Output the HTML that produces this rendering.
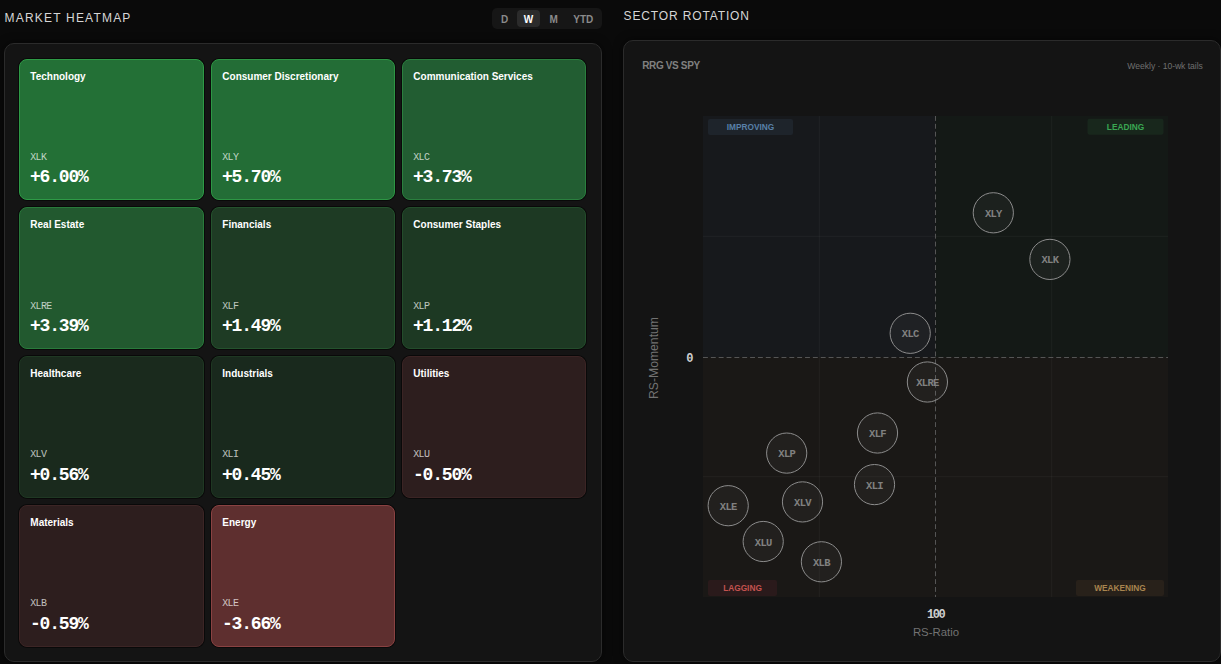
<!DOCTYPE html>
<html><head><meta charset="utf-8"><title>Market Heatmap</title>
<style>
html,body{margin:0;padding:0;background:#0a0a0a;width:1221px;height:664px;overflow:hidden;position:relative}
.panel{position:absolute;background:#141414;border:1px solid #2b2b2b;border-radius:10px;box-sizing:border-box;box-shadow:0 0 10px rgba(0,0,0,0.6)}
.card{position:absolute;box-sizing:border-box;border-radius:8px;border:1px solid;box-shadow:0 0 0 1px rgba(0,0,0,0.55)}
</style></head><body>

<div style="position:absolute;left:4.50px;top:11.84px;font:400 12px/12px 'Liberation Sans', sans-serif;color:#d6d6d6;letter-spacing:1.2px;white-space:nowrap;">MARKET HEATMAP</div>
<div style="position:absolute;left:623.60px;top:9.84px;font:400 12px/12px 'Liberation Sans', sans-serif;color:#d6d6d6;letter-spacing:0.86px;white-space:nowrap;">SECTOR ROTATION</div>
<div style="position:absolute;left:492px;top:8px;width:110px;height:21px;background:#161616;border-radius:5px"></div>
<div style="position:absolute;left:517px;top:10px;width:23px;height:17px;background:#2b2b2b;border-radius:4px"></div>
<div style="position:absolute;left:474.70px;width:60px;text-align:center;top:14.93px;font:700 10px/10px 'Liberation Sans', sans-serif;color:#8a8a8a;letter-spacing:0px;white-space:nowrap">D</div>
<div style="position:absolute;left:498.40px;width:60px;text-align:center;top:14.93px;font:700 10px/10px 'Liberation Sans', sans-serif;color:#ffffff;letter-spacing:0px;white-space:nowrap">W</div>
<div style="position:absolute;left:523.60px;width:60px;text-align:center;top:14.93px;font:700 10px/10px 'Liberation Sans', sans-serif;color:#8a8a8a;letter-spacing:0px;white-space:nowrap">M</div>
<div style="position:absolute;left:553.30px;width:60px;text-align:center;top:14.93px;font:700 10px/10px 'Liberation Sans', sans-serif;color:#8a8a8a;letter-spacing:0px;white-space:nowrap">YTD</div>
<div class="panel" style="left:4px;top:43px;width:598px;height:619px"></div>
<div class="panel" style="left:623px;top:40px;width:598px;height:622px"></div>
<div class="card" style="left:19px;top:59px;width:185px;height:141px;background:#237036;border-color:#2e9a46"></div>
<div style="position:absolute;left:30.30px;top:71.63px;font:700 10px/10px 'Liberation Sans', sans-serif;color:#ffffff;letter-spacing:0px;white-space:nowrap;">Technology</div>
<div style="position:absolute;left:30.30px;top:152.89px;font:400 10px/10px 'Liberation Mono', monospace;color:rgba(255,255,255,0.72);letter-spacing:-0.7px;white-space:nowrap;">XLK</div>
<div style="position:absolute;left:30.00px;top:168.35px;font:700 18px/18px 'Liberation Mono', monospace;color:#ffffff;letter-spacing:-1.2px;white-space:nowrap;">+6.00%</div>
<div class="card" style="left:211px;top:59px;width:184px;height:141px;background:#236d36;border-color:#2d9644"></div>
<div style="position:absolute;left:222.30px;top:71.63px;font:700 10px/10px 'Liberation Sans', sans-serif;color:#ffffff;letter-spacing:0px;white-space:nowrap;">Consumer Discretionary</div>
<div style="position:absolute;left:222.30px;top:152.89px;font:400 10px/10px 'Liberation Mono', monospace;color:rgba(255,255,255,0.72);letter-spacing:-0.7px;white-space:nowrap;">XLY</div>
<div style="position:absolute;left:222.00px;top:168.35px;font:700 18px/18px 'Liberation Mono', monospace;color:#ffffff;letter-spacing:-1.2px;white-space:nowrap;">+5.70%</div>
<div class="card" style="left:402px;top:59px;width:184px;height:141px;background:#225d32;border-color:#2a7f3e"></div>
<div style="position:absolute;left:413.30px;top:71.63px;font:700 10px/10px 'Liberation Sans', sans-serif;color:#ffffff;letter-spacing:0px;white-space:nowrap;">Communication Services</div>
<div style="position:absolute;left:413.30px;top:152.89px;font:400 10px/10px 'Liberation Mono', monospace;color:rgba(255,255,255,0.72);letter-spacing:-0.7px;white-space:nowrap;">XLC</div>
<div style="position:absolute;left:413.00px;top:168.35px;font:700 18px/18px 'Liberation Mono', monospace;color:#ffffff;letter-spacing:-1.2px;white-space:nowrap;">+3.73%</div>
<div class="card" style="left:19px;top:207px;width:185px;height:142px;background:#22592f;border-color:#297a3b"></div>
<div style="position:absolute;left:30.30px;top:220.38px;font:700 10px/10px 'Liberation Sans', sans-serif;color:#ffffff;letter-spacing:0px;white-space:nowrap;">Real Estate</div>
<div style="position:absolute;left:30.30px;top:301.63px;font:400 10px/10px 'Liberation Mono', monospace;color:rgba(255,255,255,0.72);letter-spacing:-0.7px;white-space:nowrap;">XLRE</div>
<div style="position:absolute;left:30.00px;top:317.10px;font:700 18px/18px 'Liberation Mono', monospace;color:#ffffff;letter-spacing:-1.2px;white-space:nowrap;">+3.39%</div>
<div class="card" style="left:211px;top:207px;width:184px;height:142px;background:#1e3b24;border-color:#24522d"></div>
<div style="position:absolute;left:222.30px;top:220.38px;font:700 10px/10px 'Liberation Sans', sans-serif;color:#ffffff;letter-spacing:0px;white-space:nowrap;">Financials</div>
<div style="position:absolute;left:222.30px;top:301.63px;font:400 10px/10px 'Liberation Mono', monospace;color:rgba(255,255,255,0.72);letter-spacing:-0.7px;white-space:nowrap;">XLF</div>
<div style="position:absolute;left:222.00px;top:317.10px;font:700 18px/18px 'Liberation Mono', monospace;color:#ffffff;letter-spacing:-1.2px;white-space:nowrap;">+1.49%</div>
<div class="card" style="left:402px;top:207px;width:184px;height:142px;background:#1d3923;border-color:#234c2b"></div>
<div style="position:absolute;left:413.30px;top:220.38px;font:700 10px/10px 'Liberation Sans', sans-serif;color:#ffffff;letter-spacing:0px;white-space:nowrap;">Consumer Staples</div>
<div style="position:absolute;left:413.30px;top:301.63px;font:400 10px/10px 'Liberation Mono', monospace;color:rgba(255,255,255,0.72);letter-spacing:-0.7px;white-space:nowrap;">XLP</div>
<div style="position:absolute;left:413.00px;top:317.10px;font:700 18px/18px 'Liberation Mono', monospace;color:#ffffff;letter-spacing:-1.2px;white-space:nowrap;">+1.12%</div>
<div class="card" style="left:19px;top:356px;width:185px;height:142px;background:#1a2a1d;border-color:#1f3823"></div>
<div style="position:absolute;left:30.30px;top:369.14px;font:700 10px/10px 'Liberation Sans', sans-serif;color:#ffffff;letter-spacing:0px;white-space:nowrap;">Healthcare</div>
<div style="position:absolute;left:30.30px;top:450.38px;font:400 10px/10px 'Liberation Mono', monospace;color:rgba(255,255,255,0.72);letter-spacing:-0.7px;white-space:nowrap;">XLV</div>
<div style="position:absolute;left:30.00px;top:465.85px;font:700 18px/18px 'Liberation Mono', monospace;color:#ffffff;letter-spacing:-1.2px;white-space:nowrap;">+0.56%</div>
<div class="card" style="left:211px;top:356px;width:184px;height:142px;background:#19291d;border-color:#1e3722"></div>
<div style="position:absolute;left:222.30px;top:369.14px;font:700 10px/10px 'Liberation Sans', sans-serif;color:#ffffff;letter-spacing:0px;white-space:nowrap;">Industrials</div>
<div style="position:absolute;left:222.30px;top:450.38px;font:400 10px/10px 'Liberation Mono', monospace;color:rgba(255,255,255,0.72);letter-spacing:-0.7px;white-space:nowrap;">XLI</div>
<div style="position:absolute;left:222.00px;top:465.85px;font:700 18px/18px 'Liberation Mono', monospace;color:#ffffff;letter-spacing:-1.2px;white-space:nowrap;">+0.45%</div>
<div class="card" style="left:402px;top:356px;width:184px;height:142px;background:#2d1e1e;border-color:#3b2424"></div>
<div style="position:absolute;left:413.30px;top:369.14px;font:700 10px/10px 'Liberation Sans', sans-serif;color:#ffffff;letter-spacing:0px;white-space:nowrap;">Utilities</div>
<div style="position:absolute;left:413.30px;top:450.38px;font:400 10px/10px 'Liberation Mono', monospace;color:rgba(255,255,255,0.72);letter-spacing:-0.7px;white-space:nowrap;">XLU</div>
<div style="position:absolute;left:413.00px;top:465.85px;font:700 18px/18px 'Liberation Mono', monospace;color:#ffffff;letter-spacing:-1.2px;white-space:nowrap;">-0.50%</div>
<div class="card" style="left:19px;top:505px;width:185px;height:142px;background:#2d1e1e;border-color:#3c2525"></div>
<div style="position:absolute;left:30.30px;top:517.88px;font:700 10px/10px 'Liberation Sans', sans-serif;color:#ffffff;letter-spacing:0px;white-space:nowrap;">Materials</div>
<div style="position:absolute;left:30.30px;top:599.13px;font:400 10px/10px 'Liberation Mono', monospace;color:rgba(255,255,255,0.72);letter-spacing:-0.7px;white-space:nowrap;">XLB</div>
<div style="position:absolute;left:30.00px;top:614.60px;font:700 18px/18px 'Liberation Mono', monospace;color:#ffffff;letter-spacing:-1.2px;white-space:nowrap;">-0.59%</div>
<div class="card" style="left:211px;top:505px;width:184px;height:142px;background:#5e2f2f;border-color:#8a4242"></div>
<div style="position:absolute;left:222.30px;top:517.88px;font:700 10px/10px 'Liberation Sans', sans-serif;color:#ffffff;letter-spacing:0px;white-space:nowrap;">Energy</div>
<div style="position:absolute;left:222.30px;top:599.13px;font:400 10px/10px 'Liberation Mono', monospace;color:rgba(255,255,255,0.72);letter-spacing:-0.7px;white-space:nowrap;">XLE</div>
<div style="position:absolute;left:222.00px;top:614.60px;font:700 18px/18px 'Liberation Mono', monospace;color:#ffffff;letter-spacing:-1.2px;white-space:nowrap;">-3.66%</div>
<div style="position:absolute;left:642.20px;top:60.53px;font:700 10px/10px 'Liberation Sans', sans-serif;color:#808080;letter-spacing:-0.35px;white-space:nowrap;">RRG VS SPY</div>
<div style="position:absolute;right:18.200000000000045px;top:61.72px;letter-spacing:-0.04px;font:400 8.6px/8.6px 'Liberation Sans', sans-serif;color:#6f6f6f;white-space:nowrap">Weekly · 10-wk tails</div>
<svg style="position:absolute;left:0;top:0" width="1221" height="664" viewBox="0 0 1221 664">
<rect x="703" y="116" width="232.5" height="241" fill="#17191c"/>
<rect x="935.5" y="116" width="232.5" height="241" fill="#141916"/>
<rect x="703" y="357" width="232.5" height="240" fill="#1a1816"/>
<rect x="935.5" y="357" width="232.5" height="240" fill="#1a1816"/>
<line x1="819.25" y1="116" x2="819.25" y2="597" stroke="rgba(255,255,255,0.045)" stroke-width="1"/>
<line x1="1051.75" y1="116" x2="1051.75" y2="597" stroke="rgba(255,255,255,0.045)" stroke-width="1"/>
<line x1="703" y1="236.25" x2="1168" y2="236.25" stroke="rgba(255,255,255,0.045)" stroke-width="1"/>
<line x1="703" y1="476.75" x2="1168" y2="476.75" stroke="rgba(255,255,255,0.045)" stroke-width="1"/>
<line x1="935.5" y1="116" x2="935.5" y2="597" stroke="#555555" stroke-width="1" stroke-dasharray="4.9 2.95"/>
<line x1="703" y1="357.5" x2="1168" y2="357.5" stroke="#555555" stroke-width="1" stroke-dasharray="4.9 2.95"/>
<rect x="708" y="119" width="85" height="16" rx="2" fill="#1e242b"/>
<rect x="1087.5" y="118.8" width="76" height="16" rx="2" fill="#18271c"/>
<rect x="708" y="580" width="69" height="16" rx="2" fill="#2a1a1b"/>
<rect x="1076" y="580" width="88" height="16" rx="2" fill="#28211a"/>
</svg>
<div style="position:absolute;left:708.00px;width:85px;text-align:center;top:123.17px;font:700 8.3px/8.3px 'Liberation Sans', sans-serif;color:#5880a8;letter-spacing:0px;white-space:nowrap">IMPROVING</div>
<div style="position:absolute;left:1087.50px;width:76px;text-align:center;top:122.97px;font:700 8.3px/8.3px 'Liberation Sans', sans-serif;color:#3aa853;letter-spacing:0px;white-space:nowrap">LEADING</div>
<div style="position:absolute;left:708.00px;width:69px;text-align:center;top:584.17px;font:700 8.3px/8.3px 'Liberation Sans', sans-serif;color:#c4524f;letter-spacing:0px;white-space:nowrap">LAGGING</div>
<div style="position:absolute;left:1076.00px;width:88px;text-align:center;top:584.17px;font:700 8.3px/8.3px 'Liberation Sans', sans-serif;color:#a8854f;letter-spacing:0px;white-space:nowrap">WEAKENING</div>
<svg style="position:absolute;left:0;top:0" width="1221" height="664" viewBox="0 0 1221 664">
<circle cx="993.3" cy="212.8" r="20.1" fill="rgba(255,255,255,0.035)" stroke="#8c8c8c" stroke-width="1"/>
<circle cx="1049.9" cy="259.4" r="20.1" fill="rgba(255,255,255,0.035)" stroke="#8c8c8c" stroke-width="1"/>
<circle cx="910.2" cy="333.3" r="20.1" fill="rgba(255,255,255,0.035)" stroke="#8c8c8c" stroke-width="1"/>
<circle cx="927.4" cy="382" r="20.1" fill="rgba(255,255,255,0.035)" stroke="#8c8c8c" stroke-width="1"/>
<circle cx="877.5" cy="433" r="20.1" fill="rgba(255,255,255,0.035)" stroke="#8c8c8c" stroke-width="1"/>
<circle cx="786.7" cy="453.1" r="20.1" fill="rgba(255,255,255,0.035)" stroke="#8c8c8c" stroke-width="1"/>
<circle cx="874.5" cy="484.6" r="20.1" fill="rgba(255,255,255,0.035)" stroke="#8c8c8c" stroke-width="1"/>
<circle cx="728.2" cy="505.7" r="20.1" fill="rgba(255,255,255,0.035)" stroke="#8c8c8c" stroke-width="1"/>
<circle cx="802.5" cy="501.9" r="20.1" fill="rgba(255,255,255,0.035)" stroke="#8c8c8c" stroke-width="1"/>
<circle cx="763.2" cy="541.5" r="20.1" fill="rgba(255,255,255,0.035)" stroke="#8c8c8c" stroke-width="1"/>
<circle cx="821.4" cy="561.8" r="20.1" fill="rgba(255,255,255,0.035)" stroke="#8c8c8c" stroke-width="1"/>
</svg>
<div style="position:absolute;left:963.30px;width:60px;text-align:center;top:208.85px;font:700 10.5px/10.5px 'Liberation Mono', monospace;color:#808080;letter-spacing:-0.7px;white-space:nowrap">XLY</div>
<div style="position:absolute;left:1019.90px;width:60px;text-align:center;top:255.45px;font:700 10.5px/10.5px 'Liberation Mono', monospace;color:#808080;letter-spacing:-0.7px;white-space:nowrap">XLK</div>
<div style="position:absolute;left:880.20px;width:60px;text-align:center;top:329.35px;font:700 10.5px/10.5px 'Liberation Mono', monospace;color:#808080;letter-spacing:-0.7px;white-space:nowrap">XLC</div>
<div style="position:absolute;left:897.40px;width:60px;text-align:center;top:378.05px;font:700 10.5px/10.5px 'Liberation Mono', monospace;color:#808080;letter-spacing:-0.7px;white-space:nowrap">XLRE</div>
<div style="position:absolute;left:847.50px;width:60px;text-align:center;top:429.05px;font:700 10.5px/10.5px 'Liberation Mono', monospace;color:#808080;letter-spacing:-0.7px;white-space:nowrap">XLF</div>
<div style="position:absolute;left:756.70px;width:60px;text-align:center;top:449.15px;font:700 10.5px/10.5px 'Liberation Mono', monospace;color:#808080;letter-spacing:-0.7px;white-space:nowrap">XLP</div>
<div style="position:absolute;left:844.50px;width:60px;text-align:center;top:480.65px;font:700 10.5px/10.5px 'Liberation Mono', monospace;color:#808080;letter-spacing:-0.7px;white-space:nowrap">XLI</div>
<div style="position:absolute;left:698.20px;width:60px;text-align:center;top:501.75px;font:700 10.5px/10.5px 'Liberation Mono', monospace;color:#808080;letter-spacing:-0.7px;white-space:nowrap">XLE</div>
<div style="position:absolute;left:772.50px;width:60px;text-align:center;top:497.95px;font:700 10.5px/10.5px 'Liberation Mono', monospace;color:#808080;letter-spacing:-0.7px;white-space:nowrap">XLV</div>
<div style="position:absolute;left:733.20px;width:60px;text-align:center;top:537.55px;font:700 10.5px/10.5px 'Liberation Mono', monospace;color:#808080;letter-spacing:-0.7px;white-space:nowrap">XLU</div>
<div style="position:absolute;left:791.40px;width:60px;text-align:center;top:557.85px;font:700 10.5px/10.5px 'Liberation Mono', monospace;color:#808080;letter-spacing:-0.7px;white-space:nowrap">XLB</div>
<div style="position:absolute;left:679.20px;width:20px;text-align:center;top:353.40px;font:700 12px/12px 'Liberation Mono', monospace;color:#cfcfcf;letter-spacing:-1.4px;white-space:nowrap">0</div>
<div style="position:absolute;left:905.60px;width:60px;text-align:center;top:608.80px;font:700 12px/12px 'Liberation Mono', monospace;color:#cfcfcf;letter-spacing:-1.4px;white-space:nowrap">100</div>
<div style="position:absolute;left:886.00px;width:100px;text-align:center;top:627.35px;font:400 11.4px/11.4px 'Liberation Sans', sans-serif;color:#727272;letter-spacing:0px;white-space:nowrap">RS-Ratio</div>
<div style="position:absolute;left:603.7px;top:351.5px;width:100px;height:12px;text-align:center;transform:rotate(-90deg);font:400 12.2px/12px 'Liberation Sans', sans-serif;color:#727272;white-space:nowrap">RS-Momentum</div>
</body></html>
